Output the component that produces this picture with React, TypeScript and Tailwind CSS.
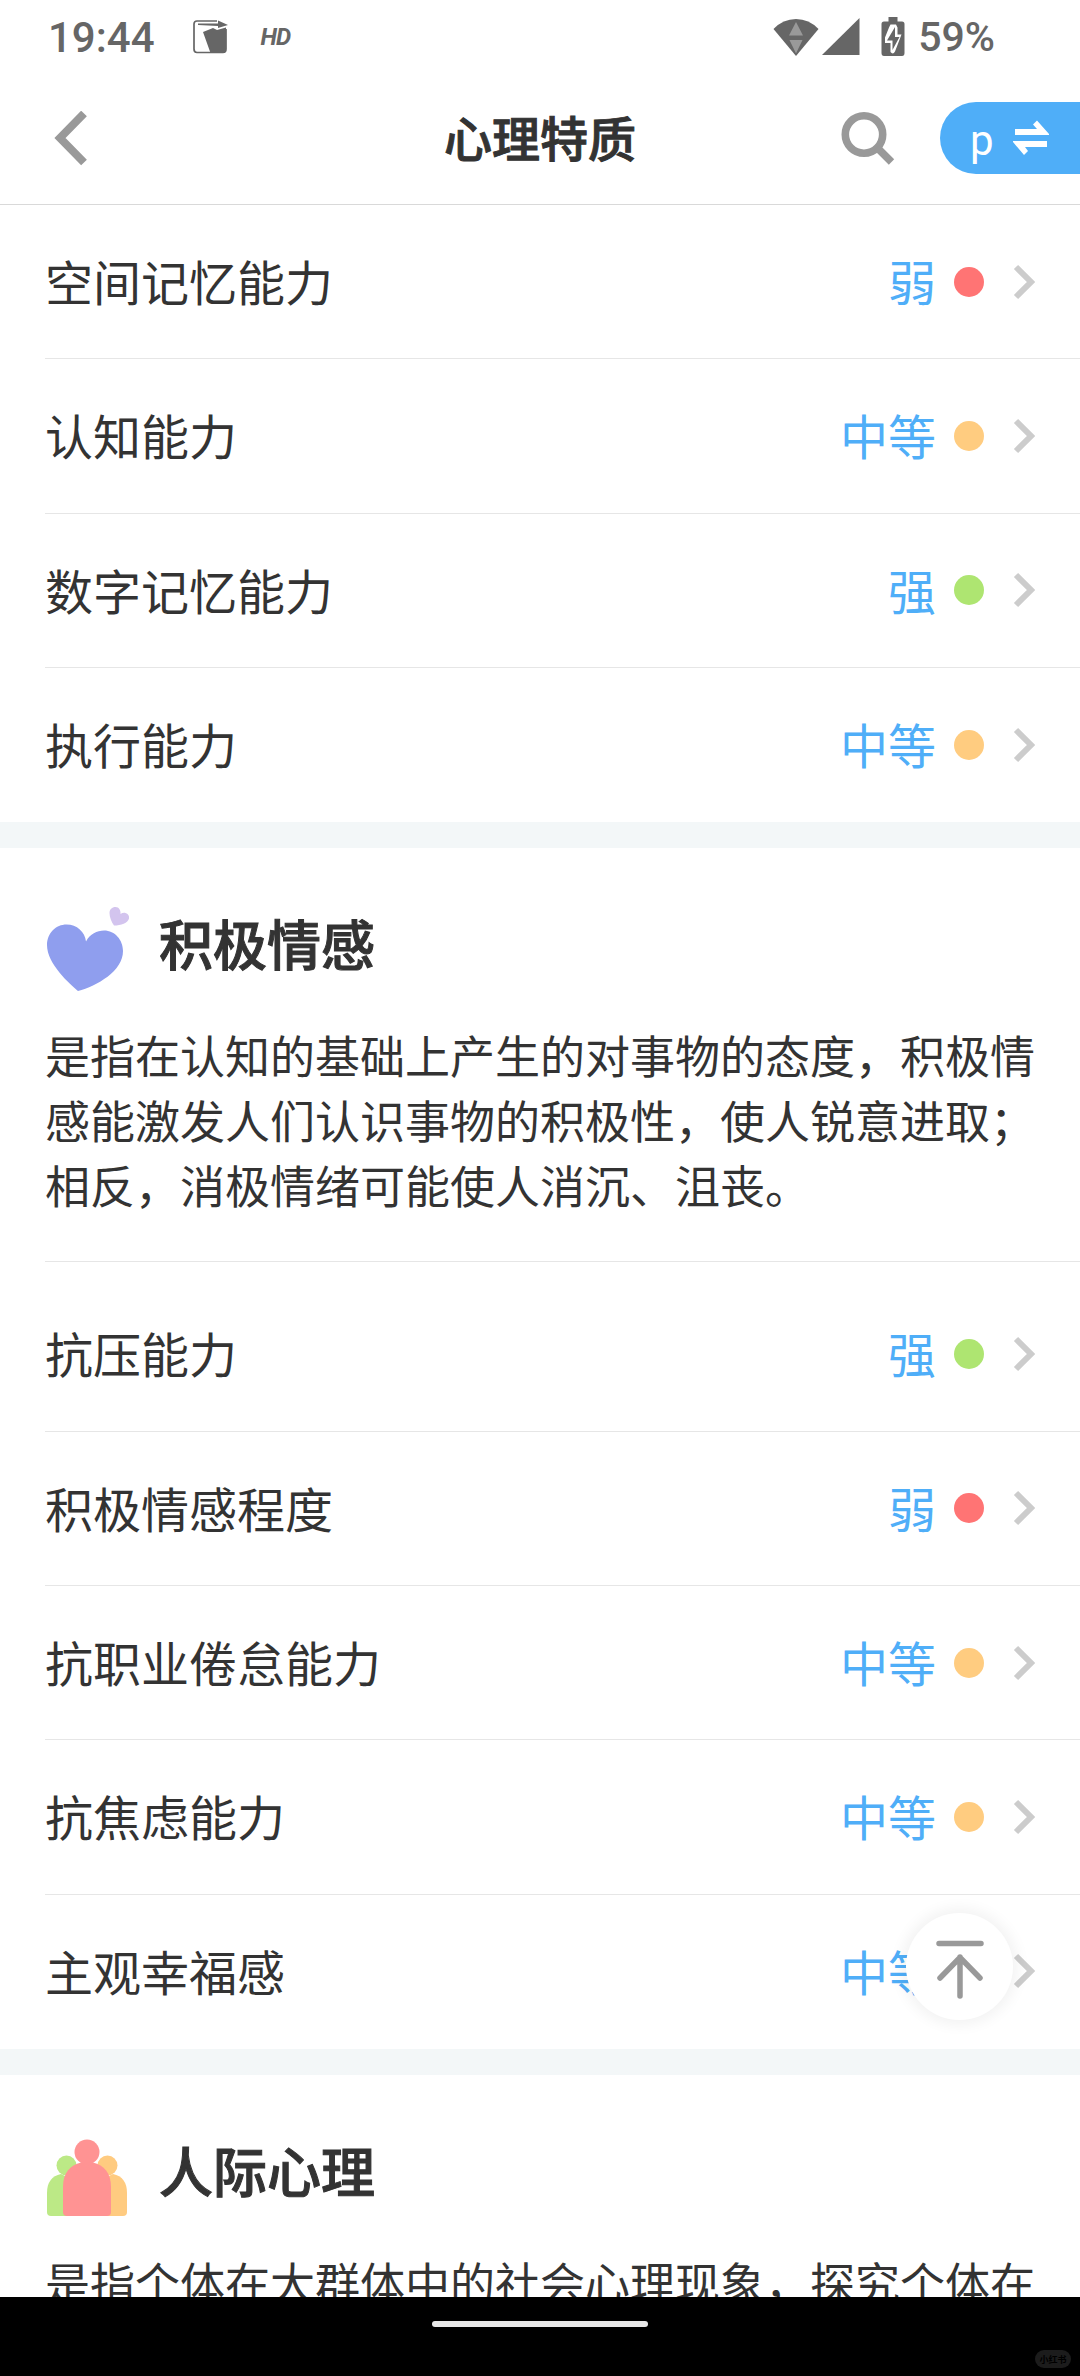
type Level = '弱' | '中等' | '强';

interface Trait {
  name: string;
  level: Level;
}

const cognitiveTraits: Trait[] = [
  { name: '空间记忆能力', level: '弱' },
  { name: '认知能力', level: '中等' },
  { name: '数字记忆能力', level: '强' },
  { name: '执行能力', level: '中等' },
];

const emotionTraits: Trait[] = [
  { name: '抗压能力', level: '强' },
  { name: '积极情感程度', level: '弱' },
  { name: '抗职业倦怠能力', level: '中等' },
  { name: '抗焦虑能力', level: '中等' },
  { name: '主观幸福感', level: '中等' },
];

const getDotColor = (level: Level) => {
  switch (level) {
    case '弱':
      return 'bg-[#ff7474]';
    case '强':
      return 'bg-[#aee571]';
    default:
      return 'bg-[#ffcc80]';
  }
};

function StatusBar() {
  return (
    <div className="flex h-[73px] shrink-0 items-center pl-12 pr-[85px] font-[Roboto,sans-serif] text-[#666]">
      <span className="pt-0.5 text-[42px] font-medium leading-none">19:44</span>
      <svg className="ml-[37px] h-9 w-9" viewBox="0 0 36 36">
        <path d="M25 2H5Q2 2 2 5V30Q2 33.500 5 33.500H31Q34 33.500 34 30V10" fill="none" stroke="currentColor" strokeWidth="1.700" />
        <path d="M6 4.500H26V1.500L36 6L26 9V7L6 6Z" fill="currentColor" />
        <path d="M11 13L21 9L25 11L34 8.500V30Q34 34 31 34H18.500Z" fill="currentColor" />
      </svg>
      <span className="ml-[33px] text-[24px] font-bold italic leading-none tracking-[-1px]">HD</span>

      <div className="ml-auto flex items-center">
        <svg className="h-[38px] w-[46px]" viewBox="0 0 46 38">
          <path d="M0.500 11Q10 1 23 1T45.500 11L23 38Z" fill="currentColor" />
          <path d="M23 4L30 17.500H16ZM16.500 22H29.500L23 35.500Z" fill="#999" />
        </svg>
        <svg className="ml-[3px] h-[37px] w-[38px]" viewBox="0 0 38 37">
          <path d="M37.500 0V37H0Z" fill="currentColor" />
        </svg>
        <svg className="ml-[21px] h-10 w-6" viewBox="0 0 24 40">
          <path d="M7.500 0H16.500V4.500H21Q23.500 4.500 23.500 7V36Q23.500 39 21 39H3Q0.500 39 0.500 36V7Q0.500 4.500 3 4.500H7.500Z" fill="currentColor" />
          <path d="M9.500 7.500H15L16.500 10.500V17.500H20.500L14 34.500Q12 38 9.500 35V26H4V20.500L8 10.500Z" fill="#fff" />
          <path d="M14 10L6 23.500H11.500V33L18.500 20H14Z" fill="currentColor" />
        </svg>
        <span className="ml-[13px] pt-0.5 text-[41px] font-medium leading-none">59%</span>
      </div>
    </div>
  );
}

function Header() {
  return (
    <header className="grid h-[132px] shrink-0 grid-cols-3 items-center border-b border-[#d9d9d9]">
      <svg className="ml-[54px] h-14 w-9" viewBox="0 0 36 56" fill="none" stroke="#999" strokeWidth="8">
        <path d="M30 2.500L6 27L30 51.500" />
      </svg>
      <h1 className="pb-1.5 text-center text-[48px] font-medium leading-none text-[#333] [-webkit-text-stroke:1px_#333]">
        心理特质
      </h1>
      <div className="flex items-center justify-end">
        <svg className="h-14 w-14" viewBox="0 0 56 56" fill="none" stroke="#999">
          <circle cx="24" cy="23.500" r="18.700" strokeWidth="7.600" />
          <path d="M37 36.500L51.500 51" strokeWidth="7.600" />
        </svg>
        <div className="-mt-px ml-11 flex h-[72px] w-[140px] items-center rounded-l-full bg-[#4faef8] pl-[30px] text-white">
          <span className="w-10 pt-1.5 font-[Roboto,sans-serif] text-[42px] leading-none">p</span>
          <svg className="ml-[3px] h-9 w-9" viewBox="0 0 36 36" fill="currentColor">
            <path d="M2 9H24L20 4.500L24 0.500L36 14V15H2Z" />
            <path d="M34 27H12L15 31L11 35L0 22V21H34Z" />
          </svg>
        </div>
      </div>
    </header>
  );
}

function TraitRow({ trait, last }: { trait: Trait; last: boolean }) {
  return (
    <li
      className={`ml-[45px] flex h-[154.33px] items-center border-b pr-[45px] text-[48px] leading-none ${
        last ? 'border-transparent' : 'border-[#e6e6e6]'
      }`}
    >
      <span className="pb-[3px] text-[#333]">{trait.name}</span>
      <span className="ml-auto pb-[3px] text-[#4faef8]">{trait.level}</span>
      <span className={`ml-[18px] h-[30px] w-[30px] rounded-full ${getDotColor(trait.level)}`} />
      <svg className="ml-[29px] h-9 w-[22px]" viewBox="0 0 22 36" fill="none" stroke="#ccc" strokeWidth="6">
        <path d="M3 3L18 18L3 33" />
      </svg>
    </li>
  );
}

function TraitList({ traits }: { traits: Trait[] }) {
  return (
    <ul>
      {traits.map((trait, i) => (
        <TraitRow key={trait.name} trait={trait} last={i === traits.length - 1} />
      ))}
    </ul>
  );
}

function Divider() {
  return <div className="h-[26px] bg-[#f3f7f8]" />;
}

function HeartIcon() {
  return (
    <svg className="h-[90px] w-[90px]" viewBox="0 0 90 90">
      <path
        d="M33 87C25 80 2 60 2 41C2 29 11 20.500 21.500 20.500C32 20.500 40 28 41 37.500C45 30 52 26.500 59 26.500C70 26.500 78 36 78 47C78 67 52 82 33 87Z"
        fill="#8f9eee"
      />
      <path
        d="M69 21.500C66.500 18 64.500 13 64.500 9C64.500 5.500 67 3 70.500 3C74 3 76 6.500 75.500 10C77 9 79 8.500 80.500 9C83 9.500 84.500 12 84 14.500C83 19 76 21.500 69 21.500Z"
        fill="#d3c4ee"
      />
    </svg>
  );
}

function PeopleIcon() {
  return (
    <svg className="h-[90px] w-[90px]" viewBox="0 0 90 90">
      <g fill="#bce986">
        <circle cx="21.500" cy="34.500" r="10" />
        <path d="M2 62Q2 46 16 43L30 50V85H6Q2 85 2 81Z" />
      </g>
      <g fill="#ffcb80">
        <circle cx="62.500" cy="34.500" r="10" />
        <path d="M82 62Q82 46 68 43L54 50V85H78Q82 85 82 81Z" />
      </g>
      <g fill="#ff9393">
        <circle cx="42" cy="21" r="12.500" />
        <path d="M18 56C18 42 25 34 36 31.500H48C59 34 66 42 66 56V81Q66 85 62 85H22Q18 85 18 81Z" />
      </g>
    </svg>
  );
}

function SectionTitle({ icon, title }: { icon: React.ReactNode; title: string }) {
  return (
    <div className="flex h-[146px] items-start gap-6 pl-[45px] pt-14">
      {icon}
      <h2 className="pt-px text-[54px] font-medium leading-[76px] text-[#333] [-webkit-text-stroke:1px_#333]">{title}</h2>
    </div>
  );
}

export default function App() {
  return (
    <div className="flex h-[2376px] w-[1080px] flex-col overflow-hidden bg-white font-['Noto_Sans_CJK_SC',sans-serif]">
      <StatusBar />
      <Header />

      <main className="relative min-h-0 flex-1 overflow-hidden">
        <TraitList traits={cognitiveTraits} />
        <Divider />

        <section>
          <SectionTitle icon={<HeartIcon />} title="积极情感" />
          <p className="ml-[45px] mt-7 w-[1000px] pb-11 text-[45px] leading-[65px] text-[#333]">
            是指在认知的基础上产生的对事物的态度，积极情
            <br />
            感能激发人们认识事物的积极性，使人锐意进取；
            <br />
            相反，消极情绪可能使人消沉、沮丧。
          </p>
          <div className="ml-[45px] border-t border-[#e6e6e6] pt-[15px]" />
          <TraitList traits={emotionTraits} />
        </section>
        <Divider />

        <section>
          <SectionTitle icon={<PeopleIcon />} title="人际心理" />
          <p className="ml-[45px] mt-7 whitespace-nowrap text-[45px] leading-[65px] text-[#333]">
            是指个体在大群体中的社会心理现象，探究个体在
          </p>
        </section>

        {/* Back to top */}
        <button className="absolute right-[67px] top-[1708px] flex h-[107px] w-[107px] items-center justify-center rounded-full bg-white shadow-[0_0_14px_5px_rgba(0,0,0,0.05)]">
          <svg className="mt-1.5 h-[60px] w-[50px]" viewBox="0 0 50 60" fill="none" stroke="#999" strokeWidth="5.500" strokeLinecap="round" strokeLinejoin="round">
            <path d="M4 3.500H46M25 56V17M5 38L25 17.500L45 38" />
          </svg>
        </button>
      </main>

      <footer className="relative flex h-[79px] shrink-0 justify-center bg-black">
        <div className="mt-6 h-1.5 w-[216px] rounded-full bg-[#e8e8e8]" />
        <span className="absolute bottom-2 right-[9px] flex h-[18px] w-9 items-center justify-center rounded-full bg-[#1c1c1c] text-[9px] font-bold leading-none text-black">
          小红书
        </span>
      </footer>
    </div>
  );
}
